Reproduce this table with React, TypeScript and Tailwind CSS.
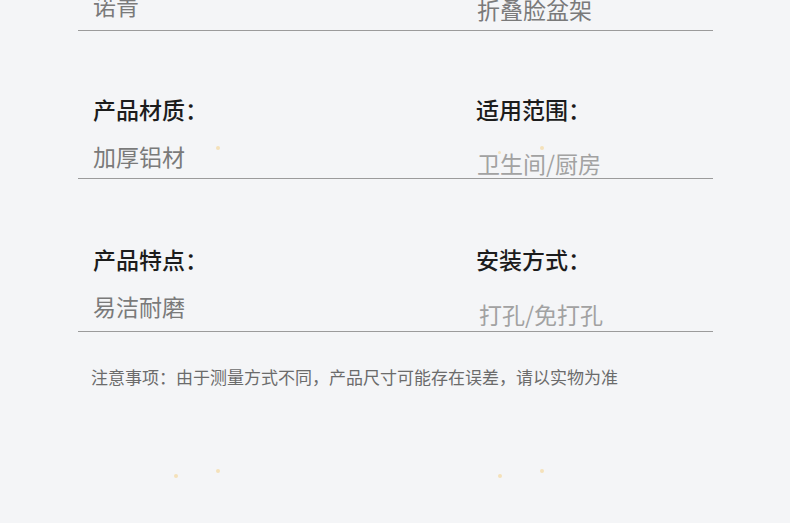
import React from "react";

const font = { fontFamily: '"Noto Sans CJK SC", "Noto Sans", sans-serif' };

function Dot({ x, y, s = 4 }: { x: number; y: number; s?: number }) {
  return (
    <span
      className="absolute rounded-full bg-[#f3d9a0] opacity-70"
      style={{ left: x, top: y, width: s, height: s }}
    />
  );
}

export default function App() {
  return (
    <div
      className="relative h-[523px] w-full overflow-hidden bg-[#f4f5f7]"
      style={font}
    >
      <div className="ml-[78px] w-[635px]">
        {/* Row 0 (partially visible) */}
        <div className="grid h-[31px] grid-cols-[398px_1fr] grid-rows-[30px] border-b border-[#9b9b9b]">
          <div className="flex min-h-0 items-end pb-[13px] pl-[15px]">
            <span className="text-[23px] leading-[23px] text-[#7a7a7a]">诺青</span>
          </div>
          <div className="flex min-h-0 items-end pb-[9px] pl-[1px]">
            <span className="text-[23px] leading-[23px] text-[#7a7a7a]">折叠脸盆架</span>
          </div>
        </div>

        {/* Row 1 */}
        <div className="grid h-[148px] grid-cols-[398px_1fr] border-b border-[#9b9b9b]">
          <div className="flex flex-col pl-[15px] pt-[67px]">
            <span className="text-[23px] font-medium leading-[23px] text-[#1c1c1c]">产品材质：</span>
            <span className="mt-[24px] text-[23px] leading-[23px] text-[#7a7a7a]">加厚铝材</span>
          </div>
          <div className="flex flex-col pt-[67px]">
            <span className="text-[23px] font-medium leading-[23px] text-[#1c1c1c]">适用范围：</span>
            <span className="mt-[31px] pl-[1px] text-[23px] leading-[23px] text-[#a2a2a2]">卫生间/厨房</span>
          </div>
        </div>

        {/* Row 2 */}
        <div className="grid h-[153px] grid-cols-[398px_1fr] border-b border-[#9b9b9b]">
          <div className="flex flex-col pl-[15px] pt-[69px]">
            <span className="text-[23px] font-medium leading-[23px] text-[#1c1c1c]">产品特点：</span>
            <span className="mt-[24px] text-[23px] leading-[23px] text-[#7a7a7a]">易洁耐磨</span>
          </div>
          <div className="flex flex-col pt-[69px]">
            <span className="text-[23px] font-medium leading-[23px] text-[#1c1c1c]">安装方式：</span>
            <span className="mt-[32px] pl-[3px] text-[23px] leading-[23px] text-[#a2a2a2]">打孔/免打孔</span>
          </div>
        </div>

        {/* Note */}
        <p className="mt-[36px] pl-[13px] text-[17px] leading-[17px] text-[#6b6b6b]">
          注意事项：由于测量方式不同，产品尺寸可能存在误差，请以实物为准
        </p>
      </div>

      {/* faint decorative sparkles */}
      <Dot x={216} y={146} s={4} />
      <Dot x={498} y={151} s={3} />
      <Dot x={540} y={146} s={4} />
      <Dot x={174} y={474} s={4} />
      <Dot x={216} y={469} s={4} />
      <Dot x={498} y={474} s={4} />
      <Dot x={540} y={469} s={4} />
    </div>
  );
}
